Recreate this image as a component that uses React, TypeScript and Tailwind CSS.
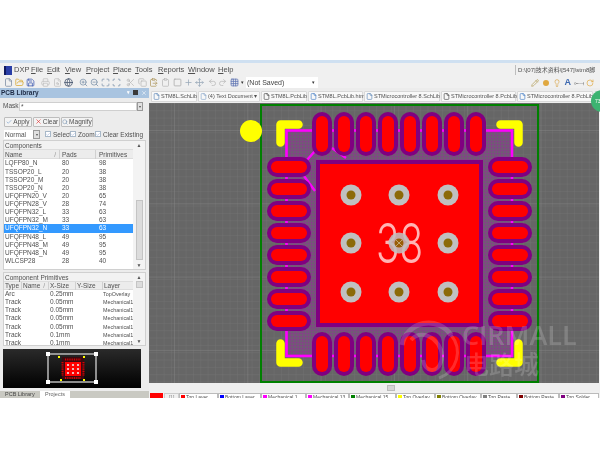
import React from 'react';
import {
  File,
  FolderOpen,
  Save,
  Printer,
  FileSearch,
  Globe,
  ZoomIn,
  ZoomOut,
  Maximize,
  Scan,
  Scissors,
  Copy,
  ClipboardPaste,
  Clipboard,
  Square,
  Plus,
  Move,
  Undo2,
  Redo2,
  Grid3x3,
  Check,
  X,
  Search,
  Pencil,
  Lightbulb,
  RotateCw,
} from 'lucide-react';

const menus = [
  ['F', 'ile', 'w-[16px]'],
  ['E', 'dit', 'w-[18px]'],
  ['V', 'iew', 'w-[21px]'],
  ['P', 'roject', 'w-[27px]'],
  ['P', 'lace', 'w-[22px]'],
  ['T', 'ools', 'w-[23px]'],
  ['R', 'eports', 'w-[30px]'],
  ['W', 'indow', 'w-[30px]'],
  ['H', 'elp', 'w-[20px]'],
];

const components = [
  ['LQFP80_N', '80', '98'],
  ['TSSOP20_L', '20', '38'],
  ['TSSOP20_M', '20', '38'],
  ['TSSOP20_N', '20', '38'],
  ['UFQFPN20_V', '20', '65'],
  ['UFQFPN28_V', '28', '74'],
  ['UFQFPN32_L', '33', '63'],
  ['UFQFPN32_M', '33', '63'],
  ['UFQFPN32_N', '33', '63'],
  ['UFQFPN48_L', '49', '95'],
  ['UFQFPN48_M', '49', '95'],
  ['UFQFPN48_N', '49', '95'],
  ['WLCSP28', '28', '40'],
];

const primitives = [
  ['Arc', '0.25mm', 'TopOverlay'],
  ['Track', '0.05mm', 'Mechanical1'],
  ['Track', '0.05mm', 'Mechanical1'],
  ['Track', '0.05mm', 'Mechanical1'],
  ['Track', '0.05mm', 'Mechanical1'],
  ['Track', '0.1mm', 'Mechanical1'],
  ['Track', '0.1mm', 'Mechanical1'],
];

const docTabs = [
  ['STM8L.SchLib', 'w-[46px]', 'text-[#4a78b0]'],
  ['(4) Text Document ▾', 'w-[62px]', 'text-[#7a9cc4]'],
  ['STM8L.PcbLib', 'w-[46px]', 'text-[#333333]'],
  ['STM8L.PcbLib.htm', 'w-[55px]', 'text-[#2f6fc0]'],
  ['STMicrocontroller 8.SchLib', 'w-[76px]', 'text-[#4a78b0]'],
  ['STMicrocontroller 8.PcbLib', 'w-[75px]', 'text-[#333333]'],
  ['STMicrocontroller 8.PcbLib', 'w-[76px]', 'text-[#2f6fc0]'],
];

const layers = [
  ['Top Layer', 'bg-[#ff0000]', 'w-[39px]'],
  ['Bottom Layer', 'bg-[#0000ff]', 'w-[43px]'],
  ['Mechanical 1', 'bg-[#ff00ff]', 'w-[45px]'],
  ['Mechanical 13', 'bg-[#ff00ff]', 'w-[43px]'],
  ['Mechanical 15', 'bg-[#008000]', 'w-[47px]'],
  ['Top Overlay', 'bg-[#ffff00]', 'w-[39px]'],
  ['Bottom Overlay', 'bg-[#808000]', 'w-[46px]'],
  ['Top Paste', 'bg-[#808080]', 'w-[36px]'],
  ['Bottom Paste', 'bg-[#800000]', 'w-[42px]'],
  ['Top Solder', 'bg-[#800080]', 'w-[40px]'],
];

const padAxis = [323, 345, 367, 389, 411, 433, 455, 477];
const padSide = [167, 189, 211, 233, 255, 277, 299, 321];
const viaX = [352, 400, 449];
const viaY = [195, 243, 292];

const Board: React.FC = () => (
  <svg width={450} height={280} viewBox="150 103 450 280" className="block">
    <defs>
      <pattern id="minor" width="7.33" height="7.33" patternUnits="userSpaceOnUse" x="150" y="103">
        <path d="M7.33 0H0V7.33" fill="none" stroke="#787878" strokeWidth="0.6" />
      </pattern>
      <pattern id="major" width="73.3" height="73.3" patternUnits="userSpaceOnUse" x="175" y="130">
        <path d="M73.3 0H0V73.3" fill="none" stroke="#8e8e8e" strokeWidth="0.7" />
      </pattern>
      <pattern id="hatch" width="3" height="3" patternUnits="userSpaceOnUse">
        <rect width="3" height="3" fill="#6c6070" />
        <path d="M0 0.7H3M0.7 0V3" stroke="#8a3a8c" strokeWidth="0.7" />
      </pattern>
    </defs>
    <rect x="150" y="103" width="450" height="280" fill="#666666" />
    <rect x="150" y="103" width="450" height="280" fill="url(#minor)" />
    <rect x="150" y="103" width="450" height="280" fill="url(#major)" />

    <rect x="288" y="131" width="225" height="225" fill="url(#hatch)" />
    <rect x="287.5" y="130.5" width="225.5" height="225.5" fill="none" stroke="#ff00ff" strokeWidth="2.6" />
    <g stroke="#ff00ff" strokeWidth="2.4" fill="none">
      <path d="M308 160L316 151" />
      <path d="M333 148L347 158" />
      <path d="M305 176L316 191" />
    </g>

    <rect x="262" y="105" width="277" height="277" fill="none" stroke="#008000" strokeWidth="2" />

    <circle cx="252" cy="131" r="11" fill="#ffff00" />
    <g stroke="#ffff00" strokeWidth="8.5" strokeLinecap="round" strokeLinejoin="round" fill="none">
      <path d="M281.5 142.5V124.5H299.5" />
      <path d="M501.5 124.5H519.5V142.5" />
      <path d="M281.5 343.5V362.5H299.5" />
      <path d="M501.5 362.5H519.5V343.5" />
    </g>

    <rect x="317" y="160" width="167" height="167" fill="#800080" />
    <rect x="321" y="164" width="159" height="159" fill="#ff0000" />

    {padAxis.map((x) => (
      <g key={x}>
        <rect x={x - 10} y="112" width="20" height="44" rx="10" fill="#800080" />
        <rect x={x - 6} y="116" width="12" height="36" rx="6" fill="#ff0000" />
        <rect x={x - 10} y="332" width="20" height="44" rx="10" fill="#800080" />
        <rect x={x - 6} y="336" width="12" height="36" rx="6" fill="#ff0000" />
      </g>
    ))}
    {padSide.map((y) => (
      <g key={y}>
        <rect x="268" y={y - 10} width="44" height="20" rx="10" fill="#800080" />
        <rect x="272" y={y - 6} width="36" height="12" rx="6" fill="#ff0000" />
        <rect x="489" y={y - 10} width="44" height="20" rx="10" fill="#800080" />
        <rect x="493" y={y - 6} width="36" height="12" rx="6" fill="#ff0000" />
      </g>
    ))}

    <text
      x="377"
      y="263"
      fontFamily="Inter, sans-serif"
      fontWeight="300"
      fontSize="55"
      fill="#ffb4b4"
      textLength="47"
      lengthAdjust="spacingAndGlyphs"
    >
      38
    </text>

    {viaY.map((y) =>
      viaX.map((x) => (
        <g key={`${x}-${y}`} opacity={x === 400 && y === 243 ? 0.88 : 1}>
          <circle cx={x} cy={y} r="10.5" fill="#c0c0c0" />
          <circle cx={x} cy={y} r="4.5" fill="#8c6a08" />
        </g>
      )),
    )}
    <path d="M397 240L403 246M403 240L397 246" stroke="#c9b98a" strokeWidth="0.8" />

    {/* watermark */}
    <g opacity="0.17" fill="none" stroke="#ffffff" strokeWidth="5">
      <path d="M403 345A27 27 0 0 1 452 335" />
      <path d="M452 335A27 27 0 0 1 440 378" strokeWidth="3" />
      <path d="M412 340C425 325 448 345 442 362C438 374 426 372 424 360" strokeWidth="4" />
    </g>
    <text x="463" y="345" fontFamily="Open Sans, sans-serif" fontWeight="600" fontSize="27" fill="#ffffff" opacity="0.17">
      CIRMALL
    </text>
    <text x="465" y="374" fontFamily="Noto Sans CJK SC, sans-serif" fontWeight="500" fontSize="25" fill="#ffffff" opacity="0.17">
      电路城
    </text>
  </svg>
);

const Preview: React.FC = () => (
  <svg width={138} height={39} viewBox="3 350 138 39" className="block">
    <defs>
      <linearGradient id="previewBg" x1="0" y1="0" x2="0" y2="1">
        <stop offset="0" stopColor="#2a2a2a" />
        <stop offset="1" stopColor="#000000" />
      </linearGradient>
    </defs>
    <rect x="3" y="350" width="138" height="39" fill="url(#previewBg)" />
    <rect x="48" y="355" width="48" height="28" fill="none" stroke="#b0b0b0" strokeWidth="1.6" />
    <rect x="62" y="358" width="22" height="22" fill="#3a0a10" />
    <rect x="65" y="363" width="16" height="14" fill="#ff0000" />
    {[68, 73, 78].map((x) =>
      [366, 370, 374].map((y) => <circle key={`${x}-${y}`} cx={x} cy={y} r="1.1" fill="#e8e8e8" />),
    )}
    <path d="M65 360.5H81M65 379H81M62.5 363V377M83.5 363V377" stroke="#d80000" strokeWidth="2" strokeDasharray="1 0.8" />
    <g fill="#ffff00">
      <rect x="58" y="357" width="2" height="2" />
      <rect x="83" y="357" width="2" height="2" />
      <rect x="60" y="380" width="2" height="2" />
      <rect x="83" y="380" width="2" height="2" />
    </g>
    <g fill="#ffffff">
      <rect x="46" y="353" width="4" height="4" />
      <rect x="94" y="353" width="4" height="4" />
      <rect x="46" y="381" width="4" height="4" />
      <rect x="94" y="381" width="4" height="4" />
    </g>
  </svg>
);

const TinyScroll: React.FC<{ thumb: string; track: string }> = ({ thumb, track }) => (
  <div className={`w-[8px] flex flex-col items-center bg-[#f3f3f3] ${track}`}>
    <span className="text-[5px] leading-[8px] text-[#555555]">▲</span>
    <div className={`w-[7px] bg-[#dcdcdc] border border-[#c4c4c4] ${thumb}`} />
    <div className="flex-1" />
    <span className="text-[5px] leading-[8px] text-[#555555]">▼</span>
  </div>
);

const App: React.FC = () => {
  return (
    <div className="w-[608px] h-[457px] bg-white overflow-hidden pt-[60px] font-['Liberation_Sans',sans-serif] text-[#505050]">
      <div className="relative w-[600px] h-[338px] flex flex-col overflow-hidden bg-[#f0f0f0] blur-[0.45px]">
        <div className="h-[3px] bg-[#cfe0f1]" />

        {/* menu */}
        <div className="h-[14px] flex items-center text-[7.5px] text-[#505050]">
          <div className="ml-[4px] w-[8px] h-[9px] bg-[#2a3fa8] border-l-2 border-[#101a60]" />
          <span className="ml-[2px] w-[17px]">DXP</span>
          {menus.map(([first, rest, w]) => (
            <span key={first + rest} className={w}>
              <span className="underline">{first}</span>
              {rest}
            </span>
          ))}
          <div className="flex-1" />
          <div className="h-[10px] w-[85px] border-l border-[#bdbdbd] pl-[2px] text-[6px] leading-[10px] whitespace-nowrap font-['Liberation_Sans','Noto_Sans_CJK_SC',sans-serif]">
            D:\[07]技术资料\[547]\stm8脚
          </div>
        </div>

        {/* toolbar */}
        <div className="h-[11px] flex items-center pl-[4px] text-[#9a9a9a]">
          <File size={9} className="text-[#7a8aa0]" />
          <FolderOpen size={9} className="ml-[2px] text-[#d8a832]" />
          <Save size={9} className="ml-[2px] text-[#3c58b0]" />
          <Printer size={9} className="ml-[6px] text-[#c0c0c0]" />
          <FileSearch size={9} className="ml-[3px] text-[#c0c0c0]" />
          <Globe size={9} className="ml-[2px] text-[#40506a]" />
          <ZoomIn size={9} className="ml-[6px] text-[#7a90a8]" />
          <ZoomOut size={9} className="ml-[2px] text-[#7a90a8]" />
          <Maximize size={9} className="ml-[2px] text-[#7a90a8]" />
          <Scan size={9} className="ml-[2px] text-[#7a90a8]" />
          <Scissors size={9} className="ml-[5px] text-[#b8b8b8]" />
          <Copy size={9} className="ml-[3px] text-[#b8b8b8]" />
          <ClipboardPaste size={9} className="ml-[2px] text-[#b09a60]" />
          <Clipboard size={9} className="ml-[3px] text-[#b8b8b8]" />
          <Square size={9} className="ml-[3px] text-[#a8a8a8]" />
          <Plus size={9} className="ml-[2px] text-[#98a8b8]" />
          <Move size={9} className="ml-[2px] text-[#98a8b8]" />
          <Undo2 size={9} className="ml-[4px] text-[#b8b8b8]" />
          <Redo2 size={9} className="ml-[1px] text-[#b8b8b8]" />
          <Grid3x3 size={9} className="ml-[3px] text-[#5a70b0]" />
          <span className="ml-[2px] text-[5px] text-[#333333]">▾</span>
          <div className="ml-[2px] w-[72px] h-[11px] bg-white px-[1px] text-[7px] leading-[11px] text-[#444444]">
            (Not Saved)
          </div>
          <span className="ml-[-6px] text-[5px] text-[#333333]">▾</span>
          <div className="flex-1" />
          <Pencil size={8} className="text-[#b09a50]" />
          <div className="ml-[4px] w-[6px] h-[6px] rounded-full bg-[#e0a840]" />
          <Lightbulb size={8} className="ml-[4px] text-[#d8a040]" />
          <span className="ml-[4px] text-[9px] leading-none font-bold text-[#3c68b0]">A</span>
          <span className="ml-[3px] w-[9px] text-[6px] leading-none text-[#555555]">⟜⟞</span>
          <RotateCw size={8} className="ml-[3px] mr-[6px] text-[#e0a840]" />
        </div>

        <div className="flex-1 flex min-h-0">
          {/* left panel */}
          <div className="w-[149px] flex flex-col bg-[#ececec]">
            <div className="h-[10px] flex items-center bg-[#a9c4e0] text-[6.5px] font-bold text-[#1d2a44]">
              <span className="ml-[1px]">PCB Library</span>
              <div className="flex-1" />
              <span className="text-[5px] text-white">▾</span>
              <div className="ml-[3px] mr-[3px] w-[5px] h-[5px] bg-[#3a3a3a]" />
              <X size={6} className="mr-[2px] text-white" />
            </div>

            <div className="h-[17px] flex items-center text-[6.5px] pl-[3px]">
              <span className="w-[16px]">Mask</span>
              <div className="w-[118px] h-[9px] bg-white border border-[#cfcfcf] leading-[8px] pl-[1px]">*</div>
              <div className="w-[6px] h-[9px] bg-[#e0e0e0] border border-[#999999] text-[4px] leading-[8px] text-center">▾</div>
            </div>

            <div className="h-[14px] flex items-center pl-[4px] gap-[1px] text-[6.5px]">
              <div className="w-[28px] h-[10px] flex items-center justify-center gap-[1px] bg-[#f3f3f3] border border-[#bdbdbd] rounded-[1px]">
                <Check size={6} className="text-[#5a8ac0]" />
                Apply
              </div>
              <div className="w-[27px] h-[10px] flex items-center justify-center gap-[1px] bg-[#f3f3f3] border border-[#bdbdbd] rounded-[1px]">
                <X size={7} className="text-[#e02020]" />
                Clear
              </div>
              <div className="w-[32px] h-[10px] flex items-center justify-center gap-[1px] bg-[#f3f3f3] border border-[#bdbdbd] rounded-[1px]">
                <Search size={6} className="text-[#6a88a8]" />
                Magnify
              </div>
            </div>

            <div className="h-[12px] flex items-center pl-[4px] text-[6.5px]">
              <div className="w-[29px] h-[9px] bg-white leading-[9px] pl-[1px]">Normal</div>
              <div className="w-[7px] h-[9px] bg-[#e0e0e0] border border-[#999999] text-[4px] leading-[7px] text-center">▾</div>
              <div className="ml-[5px] w-[6px] h-[6px] bg-white border border-[#a8b8c8] flex items-center justify-center">
                <Check size={5} className="text-[#4a70c0]" />
              </div>
              <span className="ml-[2px] w-[17px]">Select</span>
              <div className="w-[6px] h-[6px] bg-white border border-[#a8b8c8] flex items-center justify-center">
                <Check size={5} className="text-[#4a70c0]" />
              </div>
              <span className="ml-[2px] w-[17px]">Zoom</span>
              <div className="w-[6px] h-[6px] bg-white border border-[#a8b8c8] flex items-center justify-center">
                <Check size={5} className="text-[#4a70c0]" />
              </div>
              <span className="ml-[2px] whitespace-nowrap">Clear Existing</span>
            </div>

            {/* components list */}
            <div className="mx-[3px] h-[131px] flex bg-white border border-[#d0d0d0] text-[6.5px]">
              <div className="w-[129px] flex flex-col">
                <div className="h-[9px] leading-[9px] pl-[1px] bg-[#f2f2f2] border-b border-[#dddddd]">Components</div>
                <div className="h-[9px] grid grid-cols-[56px_36px_37px] bg-[#ececec] leading-[9px] border-b border-[#dddddd]">
                  <span className="pl-[1px] flex justify-between pr-[3px] border-r border-[#d0d0d0]">
                    Name <span className="text-[#999999]">/</span>
                  </span>
                  <span className="pl-[2px] border-r border-[#d0d0d0]">Pads</span>
                  <span className="pl-[3px]">Primitives</span>
                </div>
                {components.map(([name, pads, prims]) => (
                  <div
                    key={name}
                    className={`h-[8.14px] leading-[8.14px] grid grid-cols-[56px_36px_37px] ${
                      name === 'UFQFPN32_N' ? 'bg-[#3399ff] text-white' : ''
                    }`}
                  >
                    <span className="pl-[1px]">{name}</span>
                    <span className="pl-[2px]">{pads}</span>
                    <span className="pl-[3px]">{prims}</span>
                  </div>
                ))}
              </div>
              <TinyScroll track="flex-1" thumb="mt-[51px] h-[60px]" />
            </div>

            <div className="h-[2px]" />

            {/* primitives list */}
            <div className="mx-[3px] h-[74px] flex bg-white border border-[#d0d0d0] text-[6.5px]">
              <div className="w-[129px] flex flex-col">
                <div className="h-[9px] leading-[9px] pl-[1px] bg-[#f2f2f2] border-b border-[#dddddd]">Component Primitives</div>
                <div className="h-[8px] grid grid-cols-[18px_27px_27px_27px_30px] bg-[#ececec] leading-[8px] border-b border-[#dddddd]">
                  <span className="pl-[1px] border-r border-[#d0d0d0]">Type</span>
                  <span className="pl-[1px] flex justify-between pr-[3px] border-r border-[#d0d0d0]">
                    Name <span className="text-[#999999]">/</span>
                  </span>
                  <span className="pl-[1px] border-r border-[#d0d0d0]">X-Size</span>
                  <span className="pl-[1px] border-r border-[#d0d0d0]">Y-Size</span>
                  <span className="pl-[1px]">Layer</span>
                </div>
                <div className="h-[57px] overflow-hidden">
                  {primitives.map(([type, size, layer], i) => (
                    <div key={i} className="h-[8.14px] leading-[8.14px] grid grid-cols-[18px_27px_27px_27px_30px]">
                      <span className="pl-[1px]">{type}</span>
                      <span />
                      <span className="pl-[1px]">{size}</span>
                      <span />
                      <span className="text-[5.4px] whitespace-nowrap">{layer}</span>
                    </div>
                  ))}
                </div>
              </div>
              <TinyScroll track="flex-1" thumb="h-[7px]" />
            </div>

            <div className="mx-[3px] mt-[3px] w-[138px] h-[39px]">
              <Preview />
            </div>

            <div className="mt-[3px] flex-1 flex items-start bg-[#c9c9c2] text-[5.5px]">
              <span className="ml-[5px] w-[35px] leading-[7px] text-[#444444]">PCB Library</span>
              <div className="w-[30px] h-[7px] bg-white text-center leading-[7px] text-[#666666]">Projects</div>
            </div>
          </div>

          {/* right: documents + canvas */}
          <div className="flex-1 flex flex-col min-w-0">
            <div className="h-[15px] flex items-end pb-[1px] pl-[2px] gap-[1px] bg-[#ececec] text-[5.5px] whitespace-nowrap">
              {docTabs.map(([label, w, tone], i) => (
                <div
                  key={i}
                  className={`${w} h-[11px] shrink-0 flex items-center gap-[1px] px-[1px] bg-[#f8f8f8] border border-[#d8d8d8] rounded-t-[1px]`}
                >
                  <File size={7} className={`shrink-0 ${tone}`} />
                  <span>{label}</span>
                </div>
              ))}
            </div>

            <div className="h-[280px]">
              <Board />
            </div>

            <div className="h-[8px] flex items-end bg-[#efefef]">
              <div className="ml-[238px] w-[8px] h-[6px] bg-[#d4d4d4] border border-[#bbbbbb]" />
            </div>

            <div className="flex-1 flex items-start pt-[2px] pl-[1px] text-[5px] leading-[7px] whitespace-nowrap overflow-hidden">
              <div className="w-[13px] h-[6px] bg-[#ff0000]" />
              <span className="ml-[1px] w-[15px] border-x border-t border-[#cccccc] text-center text-[#888888]">[1]</span>
              {layers.map(([label, color, w]) => (
                <div key={label} className={`${w} h-[7px] shrink-0 flex items-center gap-[1px] pl-[1px] bg-white border-x border-t border-[#bbbbbb]`}>
                  <span className={`w-[4px] h-[4px] shrink-0 ${color}`} />
                  {label}
                </div>
              ))}
            </div>
          </div>
        </div>

        {/* floating badge */}
        <div className="absolute left-[591px] top-[30px] w-[22px] h-[22px] rounded-full bg-[#3cb371] pl-[4px] text-[5px] leading-[22px] text-white">
          73
        </div>
      </div>
    </div>
  );
};

export default App;
